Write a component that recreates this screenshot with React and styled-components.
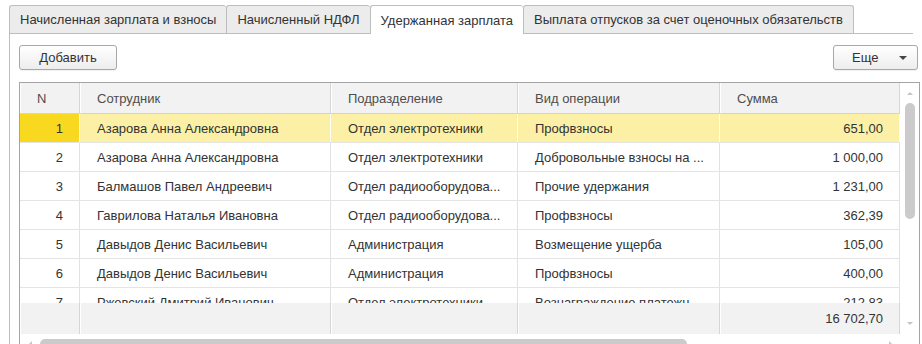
import React from 'react';
import styled, { createGlobalStyle } from 'styled-components';

const Global = createGlobalStyle`
  html, body { margin: 0; padding: 0; background: #fff; }
  body { font-family: Arial, "Liberation Sans", sans-serif; font-size: 13px; color: #333; }
`;

const Page = styled.div`
  width: 922px;
  height: 344px;
  overflow: hidden;
  box-sizing: border-box;
  padding: 5px 0 0 9px;
  background: #fff;
`;

const TabStrip = styled.div`
  display: flex;
  align-items: flex-start;
  width: 904px;
  height: 28px;
  border-bottom: 1px solid #bdbdbd;
`;

const Tab = styled.div`
  box-sizing: border-box;
  height: ${p => (p.$active ? '29px' : '28px')};
  padding: 0 10px;
  display: flex;
  align-items: center;
  white-space: nowrap;
  color: #333;
  border: 1px solid #bdbdbd;
  border-bottom: none;
  border-right: none;
  border-radius: 3px 3px 0 0;
  background: ${p => (p.$active ? '#fff' : '#ececec')};
  position: relative;
  z-index: ${p => (p.$active ? 1 : 0)};
  &:last-child { border-right: 1px solid #bdbdbd; }
`;

const Panel = styled.div`
  border-left: 1px solid #bdbdbd;
  height: 320px;
  padding: 11px 0 0 9px;
`;

const Toolbar = styled.div`
  display: flex;
  justify-content: space-between;
  width: 899px;
`;

const Button = styled.div`
  box-sizing: border-box;
  height: 25px;
  display: flex;
  align-items: center;
  justify-content: ${p => (p.$menu ? 'space-between' : 'center')};
  width: ${p => p.$w}px;
  padding: ${p => (p.$menu ? '0 10px 0 18px' : '0')};
  border: 1px solid #a8a8a8;
  border-radius: 3px;
  background: linear-gradient(#ffffff, #ededed);
  color: #333;
  box-shadow: 0 1px 1px rgba(0,0,0,0.06);
`;

const Caret = styled.span`
  width: 0;
  height: 0;
  border-left: 4px solid transparent;
  border-right: 4px solid transparent;
  border-top: 4px solid #444;
`;

const Table = styled.div`
  margin-top: 12px;
  width: 901px;
  box-sizing: border-box;
  border: 1px solid #a4a4a4;
  border-bottom: none;
  display: flex;
  flex-direction: column;
`;

const Main = styled.div`
  display: flex;
`;

const Grid = styled.div`
  width: 880px;
  display: flex;
  flex-direction: column;
`;

const COLS = '60px 251px 187px 202px 180px';

const HeaderRow = styled.div`
  display: grid;
  grid-template-columns: ${COLS};
  height: 31px;
  box-sizing: border-box;
  background: #f2f2f2;
  border-bottom: 1px solid #d3d3d3;
  color: #4d4d4d;
`;

const HeadCell = styled.div`
  display: flex;
  align-items: center;
  padding-left: 17px;
  border-right: 1px solid #d6d6d6;
  box-shadow: inset 1px 0 0 #fff;
`;

const Body = styled.div`
  height: 189px;
  overflow: hidden;
`;

const Row = styled.div`
  display: grid;
  grid-template-columns: ${COLS};
  height: 29px;
  box-sizing: border-box;
  border-bottom: 1px solid #e4e4e4;
  background: ${p => (p.$sel ? '#fbf0a6' : '#fff')};
`;

const Cell = styled.div`
  display: flex;
  align-items: center;
  justify-content: ${p => (p.$right ? 'flex-end' : 'flex-start')};
  padding: ${p => (p.$right ? '0 16px 0 0' : '0 0 0 17px')};
  border-right: 1px solid ${p => (p.$sel ? '#ffffff' : '#e2e2e2')};
  background: ${p => (p.$cur ? '#f9d91f' : 'transparent')};
  white-space: nowrap;
  overflow: hidden;
  color: #333;
`;

const FooterRow = styled.div`
  display: grid;
  grid-template-columns: ${COLS};
  height: 31px;
  box-sizing: border-box;
  background: #f2f2f2;
`;

const FootCell = styled.div`
  display: flex;
  align-items: center;
  justify-content: flex-end;
  padding-right: 16px;
  border-right: 1px solid #d6d6d6;
  box-shadow: inset 1px 0 0 #fff;
  color: #333;
`;

const VScroll = styled.div`
  width: 19px;
  display: flex;
  flex-direction: column;
  align-items: center;
  background: #fff;
`;

const ArrowUp = styled.span`
  width: 0; height: 0;
  margin-top: 9px;
  border-left: 3px solid transparent;
  border-right: 3px solid transparent;
  border-bottom: 3px solid #c4c4c4;
`;

const ArrowDown = styled.span`
  width: 0; height: 0;
  margin-top: 103px;
  border-left: 3px solid transparent;
  border-right: 3px solid transparent;
  border-top: 3px solid #c4c4c4;
`;

const VThumb = styled.div`
  width: 10px;
  height: 116px;
  margin-top: 8px;
  border-radius: 5px;
  background: #cbcbcb;
`;

const HScroll = styled.div`
  height: 12px;
  width: 880px;
  display: flex;
  align-items: flex-start;
  padding-top: 5px;
  box-sizing: border-box;
`;

const ArrowLeft = styled.span`
  width: 0; height: 0;
  margin: 2px 0 0 9px;
  border-top: 3px solid transparent;
  border-bottom: 3px solid transparent;
  border-right: 3px solid #c4c4c4;
`;

const ArrowRight = styled.span`
  width: 0; height: 0;
  margin: 2px 0 0 202px;
  border-top: 3px solid transparent;
  border-bottom: 3px solid transparent;
  border-left: 3px solid #c4c4c4;
`;

const HThumb = styled.div`
  width: 647px;
  height: 10px;
  margin-left: 8px;
  border-radius: 5px;
  background: #cbcbcb;
`;

const rows = [
  ['1', 'Азарова Анна Александровна', 'Отдел электротехники', 'Профвзносы', '651,00'],
  ['2', 'Азарова Анна Александровна', 'Отдел электротехники', 'Добровольные взносы на ...', '1 000,00'],
  ['3', 'Балмашов Павел Андреевич', 'Отдел радиооборудова...', 'Прочие удержания', '1 231,00'],
  ['4', 'Гаврилова Наталья Ивановна', 'Отдел радиооборудова...', 'Профвзносы', '362,39'],
  ['5', 'Давыдов Денис Васильевич', 'Администрация', 'Возмещение ущерба', '105,00'],
  ['6', 'Давыдов Денис Васильевич', 'Администрация', 'Профвзносы', '400,00'],
  ['7', 'Ржевский Дмитрий Иванович', 'Отдел электротехники', 'Вознаграждение платежн...', '212,83'],
];

export default function App() {
  return (
    <>
      <Global />
      <Page>
        <TabStrip>
          <Tab>Начисленная зарплата и взносы</Tab>
          <Tab>Начисленный НДФЛ</Tab>
          <Tab $active>Удержанная зарплата</Tab>
          <Tab>Выплата отпусков за счет оценочных обязательств</Tab>
        </TabStrip>
        <Panel>
          <Toolbar>
            <Button $w={98}>Добавить</Button>
            <Button $w={85} $menu>Еще<Caret /></Button>
          </Toolbar>
          <Table>
            <Main>
              <Grid>
                <HeaderRow>
                  <HeadCell>N</HeadCell>
                  <HeadCell>Сотрудник</HeadCell>
                  <HeadCell>Подразделение</HeadCell>
                  <HeadCell>Вид операции</HeadCell>
                  <HeadCell>Сумма</HeadCell>
                </HeaderRow>
                <Body>
                  {rows.map((r, i) => {
                    const sel = i === 0;
                    return (
                      <Row key={r[0]} $sel={sel}>
                        <Cell $right $sel={sel} $cur={sel}>{r[0]}</Cell>
                        <Cell $sel={sel}>{r[1]}</Cell>
                        <Cell $sel={sel}>{r[2]}</Cell>
                        <Cell $sel={sel}>{r[3]}</Cell>
                        <Cell $right $sel={sel}>{r[4]}</Cell>
                      </Row>
                    );
                  })}
                </Body>
                <FooterRow>
                  <FootCell />
                  <FootCell />
                  <FootCell />
                  <FootCell />
                  <FootCell>16 702,70</FootCell>
                </FooterRow>
              </Grid>
              <VScroll>
                <ArrowUp />
                <VThumb />
                <ArrowDown />
              </VScroll>
            </Main>
            <HScroll>
              <ArrowLeft />
              <HThumb />
              <ArrowRight />
            </HScroll>
          </Table>
        </Panel>
      </Page>
    </>
  );
}
